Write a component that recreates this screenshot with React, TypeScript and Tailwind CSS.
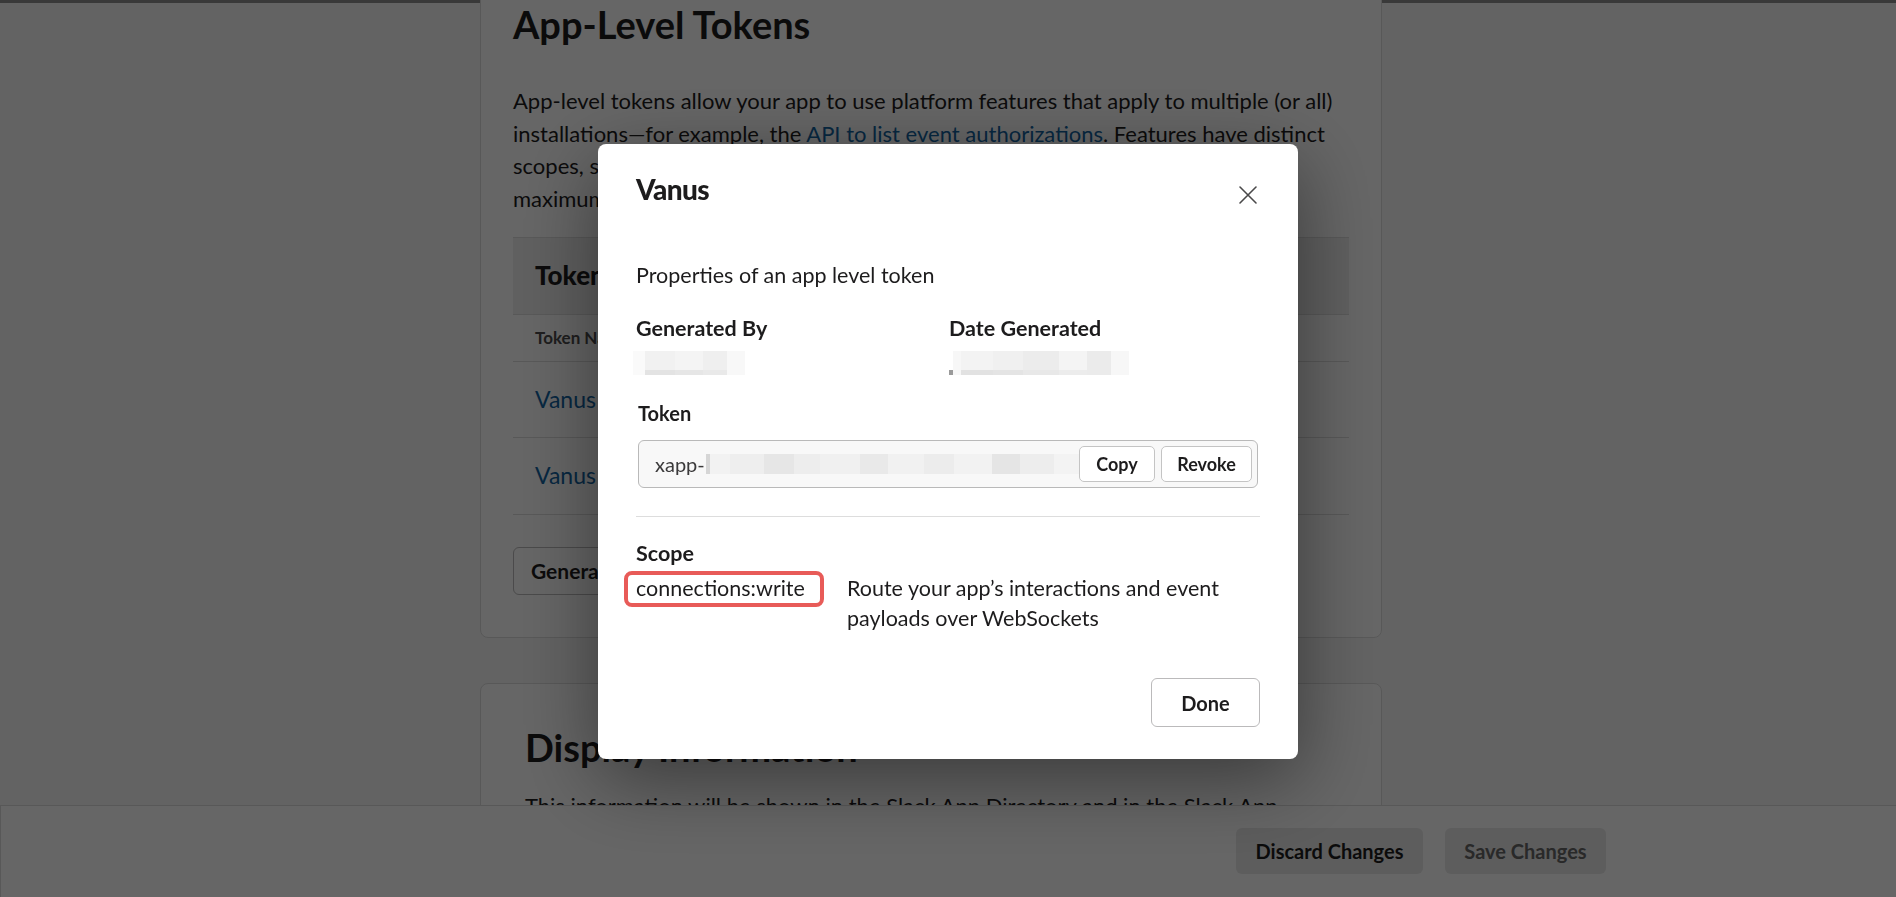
import React from "react";

type Cell = { w: number; c: string; d?: string };

function Mosaic({ cells, className, h = 24 }: { cells: Cell[]; className?: string; h?: number }) {
  return (
    <div className={"flex " + (className ?? "")} style={{ height: h }}>
      {cells.map((cell, i) => (
        <div key={i} className="flex h-full flex-col" style={{ width: cell.w }}>
          <div className="flex-1" style={{ background: cell.c }} />
          <div className="h-[5px]" style={{ background: cell.d ?? cell.c }} />
        </div>
      ))}
    </div>
  );
}

const byCells: Cell[] = [
  { w: 12, c: "#fafafa" },
  { w: 30, c: "#f1f1f1", d: "#e3e3e3" },
  { w: 28, c: "#f4f4f4", d: "#e6e6e6" },
  { w: 24, c: "#efefef", d: "#e9e9e9" },
  { w: 18, c: "#f8f8f8" },
];

const dateCells: Cell[] = [
  { w: 4, c: "#ffffff", d: "#9a9a9a" },
  { w: 8, c: "#f7f7f7" },
  { w: 32, c: "#f3f3f3", d: "#e2e2e2" },
  { w: 30, c: "#f0f0f0", d: "#e4e4e4" },
  { w: 36, c: "#ececec", d: "#e8e8e8" },
  { w: 28, c: "#f4f4f4", d: "#ececec" },
  { w: 24, c: "#ebebeb" },
  { w: 18, c: "#f7f7f7" },
];

const tokenCells: Cell[] = [
  { w: 4, c: "#d6d6d6" },
  { w: 20, c: "#f2f2f2" },
  { w: 34, c: "#eeeeee" },
  { w: 30, c: "#e6e6e6" },
  { w: 26, c: "#ededed" },
  { w: 40, c: "#f0f0f0" },
  { w: 28, c: "#e9e9e9" },
  { w: 36, c: "#f1f1f1" },
  { w: 30, c: "#ececec" },
  { w: 38, c: "#f2f2f2" },
  { w: 28, c: "#e5e5e5" },
  { w: 34, c: "#ededed" },
  { w: 26, c: "#f3f3f3" },
];

function CloseIcon() {
  return (
    <svg width="20" height="20" viewBox="0 0 20 20" fill="none">
      <path d="M2 2 L18 18 M18 2 L2 18" stroke="#4a494a" strokeWidth="1.6" strokeLinecap="round" />
    </svg>
  );
}

export default function App() {
  return (
    <div className="relative h-screen w-full overflow-hidden bg-[#f8f8f8] font-['Lato',sans-serif] text-[#1d1c1d]">
      <div className="h-[3px] bg-[#909090]" />
      <div className="pl-[480px]">
        <section className="-mt-[43px] w-[902px] rounded-[8px] border border-[#dddddd] bg-white px-[32px] pt-[42px] pb-[42px]">
          <h2 className="text-[38px] font-bold leading-[43px]">App-Level Tokens</h2>
          <p className="mt-[39px] text-[22px] leading-[32.67px]">
            App-level tokens allow your app to use platform features that apply to multiple (or all)
            <br />
            installations—for example, the <span className="text-[#1264a3]">API to list event authorizations</span>. Features have distinct
            <br />
            scopes, so each token only grants access to what it needs.
            <br />
            maximum of 25 tokens can be created for each app.
          </p>
          <div className="mt-[21px]">
            <div className="flex h-[78px] items-center border-y border-[#dddddd] bg-[#efefef] pl-[22px]">
              <span className="text-[26px] font-black">Tokens</span>
            </div>
            <div className="flex h-[47px] items-center border-b border-[#dddddd] pl-[22px]">
              <span className="text-[17px] font-bold text-[#4d4c4d]">Token Name</span>
            </div>
            <div className="flex h-[76px] items-center border-b border-[#dddddd] pl-[22px]">
              <span className="text-[23px] text-[#1264a3]">Vanus</span>
            </div>
            <div className="flex h-[77px] items-center border-b border-[#dddddd] pl-[22px]">
              <span className="text-[23px] text-[#1264a3]">Vanus</span>
            </div>
          </div>
          <button className="mt-[32px] h-[48px] rounded-[6px] border border-[#bbbabb] bg-white px-[17px] text-[21px] font-bold">
            Generate Token and Scopes
          </button>
        </section>
        <section className="mt-[45px] w-[902px] rounded-[8px] border border-[#dddddd] bg-white px-[44px] pt-[42px] pb-[60px]">
          <h2 className="text-[38px] font-bold leading-[43px]">Display Information</h2>
          <p className="mt-[21px] text-[22px] leading-[32px]">
            This information will be shown in the Slack App Directory and in the Slack App Management pages.
          </p>
        </section>
      </div>

      <div className="fixed bottom-0 left-0 right-0 flex h-[92px] gap-[22px] border-l border-t border-[#dddddd] bg-white pl-[1235px] pt-[22px]">
        <button className="h-[46px] w-[187px] rounded-[6px] bg-[#e8e8e8] text-[20px] font-bold text-[#1d1c1d]">
          Discard Changes
        </button>
        <button className="h-[46px] w-[161px] rounded-[6px] bg-[#e8e8e8] text-[20px] font-bold text-[#666666]">
          Save Changes
        </button>
      </div>

      <div className="fixed inset-0 z-10 bg-black/60" />

      <div className="fixed inset-0 z-20 flex justify-center pt-[144px]">
        <div className="h-fit w-[700px] rounded-[8px] bg-white px-[38px] pb-[32px] pt-[28px] shadow-[0_20px_80px_rgba(0,0,0,0.45)]">
          <div className="flex items-start justify-between">
            <h1 className="text-[28px] font-black leading-[34px] tracking-[-0.6px]">Vanus</h1>
            <button className="mr-[2px] mt-[13px]">
              <CloseIcon />
            </button>
          </div>
          <p className="mt-[54px] text-[21.5px] leading-[30px]">Properties of an app level token</p>
          <div className="mt-[23px] flex">
            <div className="w-[313px]">
              <div className="text-[21.5px] font-bold leading-[30px]">Generated By</div>
              <Mosaic className="-ml-[3px] mt-[8px]" cells={byCells} />
            </div>
            <div>
              <div className="text-[21.5px] font-bold leading-[30px]">Date Generated</div>
              <Mosaic className="mt-[8px]" cells={dateCells} />
            </div>
          </div>
          <div className="mt-[23px] px-[2px]">
            <div className="text-[20px] font-bold leading-[30px]">Token</div>
            <div className="relative mt-[12px] flex h-[48px] items-center overflow-hidden rounded-[6px] border border-[#b9b9b9] bg-[#f8f8f8] pl-[16px] text-[20px] text-[#3b3a3b]">
              <span>xapp-</span>
              <Mosaic h={20} className="ml-[1px]" cells={tokenCells} />
              <span className="ml-[2px]">6c4dd</span>
              <div className="absolute right-[5px] top-[5px] flex gap-[6px]">
                <button className="h-[36px] w-[76px] rounded-[5px] border border-[#c4c4c4] bg-white text-[18px] font-bold text-[#1d1c1d]">
                  Copy
                </button>
                <button className="h-[36px] w-[91px] rounded-[5px] border border-[#c4c4c4] bg-white text-[18px] font-bold text-[#1d1c1d]">
                  Revoke
                </button>
              </div>
            </div>
          </div>
          <div className="mt-[28px] h-px bg-[#dddddd]" />
          <div className="mt-[21px] text-[21.5px] font-bold leading-[30px]">Scope</div>
          <div className="mt-[5px] flex text-[21.5px] leading-[30px]">
            <div className="w-[211px] shrink-0">
              <span className="relative inline-block">
                connections:write
                <span className="absolute -bottom-[4px] -left-[12px] -right-[19px] -top-[2px] rounded-[8px] border-[4px] border-[#e85b58]" />
              </span>
            </div>
            <div className="w-[400px]">Route your app’s interactions and event payloads over WebSockets</div>
          </div>
          <div className="mt-[45px] flex justify-end">
            <button className="h-[49px] w-[109px] rounded-[6px] border border-[#bbbabb] bg-white text-[20px] font-bold">
              Done
            </button>
          </div>
        </div>
      </div>
    </div>
  );
}
